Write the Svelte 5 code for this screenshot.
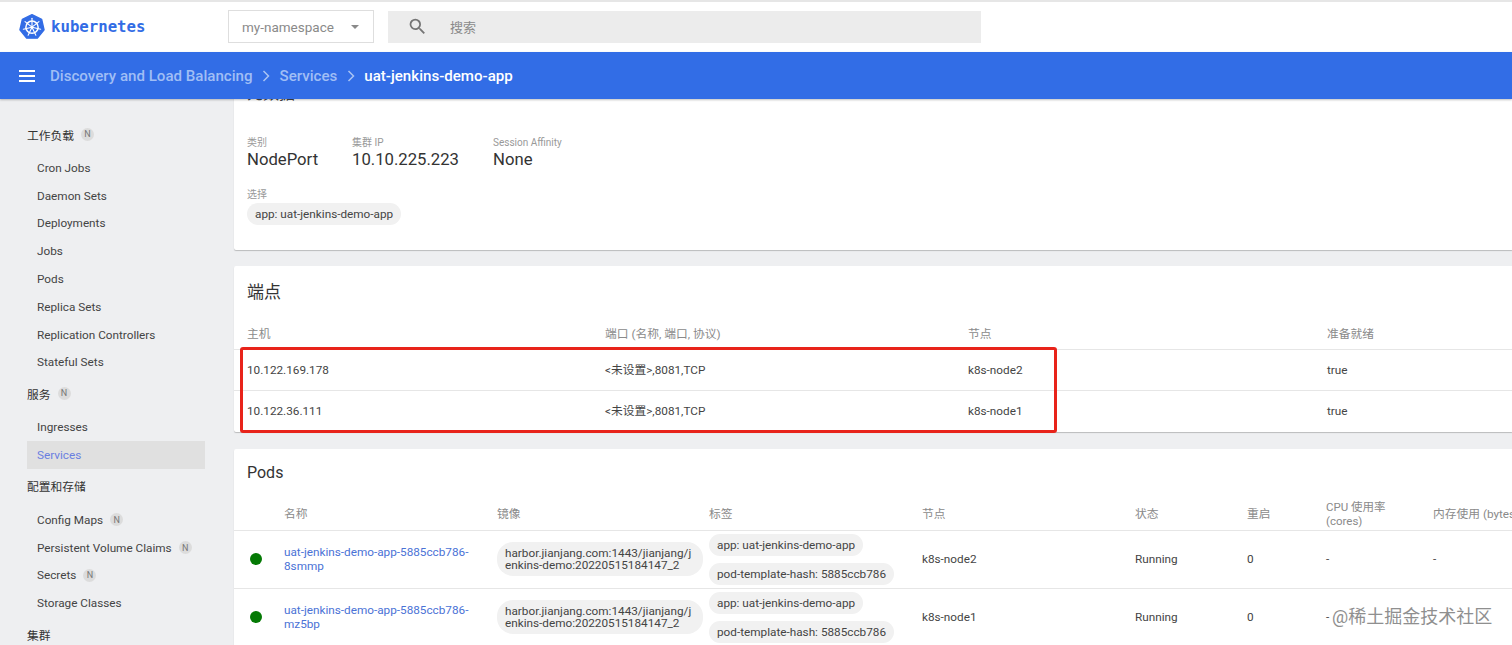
<script>
	const spokes = [0, 1, 2, 3, 4, 5, 6];

	const groups = [
		{
			title: '工作负载',
			badge: true,
			items: [
				{ label: 'Cron Jobs' },
				{ label: 'Daemon Sets' },
				{ label: 'Deployments' },
				{ label: 'Jobs' },
				{ label: 'Pods' },
				{ label: 'Replica Sets' },
				{ label: 'Replication Controllers' },
				{ label: 'Stateful Sets' }
			]
		},
		{
			title: '服务',
			badge: true,
			items: [{ label: 'Ingresses' }, { label: 'Services', active: true }]
		},
		{
			title: '配置和存储',
			items: [
				{ label: 'Config Maps', badge: true },
				{ label: 'Persistent Volume Claims', badge: true },
				{ label: 'Secrets', badge: true },
				{ label: 'Storage Classes' }
			]
		},
		{ title: '集群', items: [] }
	];

	const endpoints = [
		{ host: '10.122.169.178', port: '<未设置>,8081,TCP', node: 'k8s-node2', ready: 'true' },
		{ host: '10.122.36.111', port: '<未设置>,8081,TCP', node: 'k8s-node1', ready: 'true' }
	];

	// the watermark sits where the second row's memory value would be
	const pods = [
		{ name: 'uat-jenkins-demo-app-5885ccb786-8smmp', node: 'k8s-node2', mem: '-' },
		{ name: 'uat-jenkins-demo-app-5885ccb786-mz5bp', node: 'k8s-node1', mem: '' }
	];
</script>

<div class="page">
	<header class="top">
		<div class="brand">
			<svg class="logo" viewBox="0 0 28 28" width="26" height="26">
				<path d="M14 .8 24.4 5.8 27 17 19.8 26 8.2 26 1 17 3.6 5.8Z" fill="#326ce5" stroke="#326ce5" stroke-width="1.5" stroke-linejoin="round" />
				<g fill="none" stroke="#fff">
					<circle cx="14" cy="14.2" r="6.6" stroke-width="1.6" />
					<circle cx="14" cy="14.2" r="1.4" fill="#fff" stroke="none" />
					{#each spokes as s}
						<line x1="14" y1="14.2" x2="14" y2="4.6" stroke-width="1.2" stroke-linecap="round" transform="rotate({(s * 360) / 7} 14 14.2)" />
					{/each}
				</g>
			</svg>
			<span class="brand-name">kubernetes</span>
		</div>
		<div class="ns">
			<span>my-namespace</span>
			<i class="caret"></i>
		</div>
		<div class="search">
			<svg viewBox="0 0 24 24" width="21" height="21">
				<path d="M15.5 14h-.79l-.28-.27A6.47 6.47 0 0 0 16 9.5 6.5 6.5 0 1 0 9.5 16c1.61 0 3.09-.59 4.23-1.57l.27.28v.79l5 4.99L20.49 19l-4.99-5zm-6 0C7.01 14 5 11.99 5 9.5S7.01 5 9.5 5 14 7.01 14 9.5 11.99 14 9.5 14z" fill="#757575" />
			</svg>
			<span>搜索</span>
		</div>
	</header>

	<div class="bar">
		<div class="burger"><i></i><i></i><i></i></div>
		<span class="crumb">Discovery and Load Balancing</span>
		<svg class="chev" viewBox="0 0 8 12" width="8" height="12"><path d="M1.5 1 6.5 6 1.5 11" fill="none" stroke="#a9c3f3" stroke-width="1.5" /></svg>
		<span class="crumb">Services</span>
		<svg class="chev" viewBox="0 0 8 12" width="8" height="12"><path d="M1.5 1 6.5 6 1.5 11" fill="none" stroke="#a9c3f3" stroke-width="1.5" /></svg>
		<span class="crumb current">uat-jenkins-demo-app</span>
	</div>

	<div class="body">
		<nav class="side">
			{#each groups as group}
				<div class="group">
					<span>{group.title}</span>
					{#if group.badge}<b class="badge">N</b>{/if}
				</div>
				{#each group.items as item}
					<div class="item" class:active={item.active}>
						<span>{item.label}</span>
						{#if item.badge}<b class="badge">N</b>{/if}
					</div>
				{/each}
			{/each}
		</nav>

		<main class="main">
			<section class="card info">
				<h2 class="info-title">元数据</h2>
				<div class="facts">
					<div class="fact">
						<span class="fact-label">类别</span>
						<span class="fact-value">NodePort</span>
					</div>
					<div class="fact">
						<span class="fact-label">集群 IP</span>
						<span class="fact-value">10.10.225.223</span>
					</div>
					<div class="fact">
						<span class="fact-label">Session Affinity</span>
						<span class="fact-value">None</span>
					</div>
				</div>
				<span class="fact-label select-label">选择</span>
				<span class="chip">app: uat-jenkins-demo-app</span>
			</section>

			<section class="card endpoints">
				<h2 class="card-title ep-title">端点</h2>
				<div class="ep-row ep-head">
					<span>主机</span>
					<span>端口 (名称, 端口, 协议)</span>
					<span>节点</span>
					<span>准备就绪</span>
				</div>
				{#each endpoints as ep}
					<div class="ep-row">
						<span>{ep.host}</span>
						<span>{ep.port}</span>
						<span>{ep.node}</span>
						<span>{ep.ready}</span>
					</div>
				{/each}
				<div class="redbox"></div>
			</section>

			<section class="card pods">
				<h2 class="card-title pods-title">Pods</h2>
				<div class="pod-row pod-head">
					<span></span>
					<span>名称</span>
					<span>镜像</span>
					<span>标签</span>
					<span>节点</span>
					<span>状态</span>
					<span>重启</span>
					<span class="cpu">CPU 使用率<br />(cores)</span>
					<span class="mem">内存使用 (bytes)</span>
				</div>
				{#each pods as pod}
					<div class="pod-row">
						<i class="dot"></i>
						<a class="pod-name" href="#top">{pod.name}</a>
						<span class="chip image">harbor.jianjang.com:1443/jianjang/jenkins-demo:20220515184147_2</span>
						<div class="labels">
							<span class="chip">app: uat-jenkins-demo-app</span>
							<span class="chip">pod-template-hash: 5885ccb786</span>
						</div>
						<span>{pod.node}</span>
						<span>Running</span>
						<span>0</span>
						<span>-</span>
						<span>{pod.mem}</span>
					</div>
				{/each}
			</section>
		</main>
	</div>

	<div class="watermark">@稀土掘金技术社区</div>
</div>

<style>
	:global(body) {
		margin: 0;
		background: #eeeff1;
	}

	.page {
		position: relative;
		display: flex;
		flex-direction: column;
		height: 645px;
		overflow: hidden;
		font-family: Roboto, "Noto Sans CJK SC", sans-serif;
		font-size: 11.75px;
		color: #333;
		background: #eeeff1;
	}

	.top {
		display: flex;
		align-items: center;
		flex: none;
		box-sizing: border-box;
		height: 52px;
		padding-bottom: 1px;
		background: #fff;
		border-top: 2px solid #e6e6e6;
	}

	.brand {
		display: flex;
		align-items: center;
		width: 228px;
		padding-left: 19px;
		box-sizing: border-box;
	}

	.logo {
		flex: none;
	}

	.brand-name {
		margin-left: 6px;
		font-family: "DejaVu Sans Mono", monospace;
		font-size: 15.7px;
		font-weight: 700;
		color: #326ce5;
	}

	.ns {
		display: flex;
		align-items: center;
		justify-content: space-between;
		box-sizing: border-box;
		width: 146px;
		height: 33px;
		padding: 0 14px 0 13px;
		border: 1px solid #dedede;
		font-size: 13.5px;
		color: #8a8a8a;
	}

	.caret {
		width: 0;
		height: 0;
		border-left: 4px solid transparent;
		border-right: 4px solid transparent;
		border-top: 4px solid #8a8a8a;
	}

	.search {
		display: flex;
		align-items: center;
		box-sizing: border-box;
		width: 593px;
		height: 32px;
		margin-left: 14px;
		padding-left: 19px;
		background: #ececec;
		font-size: 13px;
		color: #8a8a8a;
	}

	.search span {
		margin-left: 22px;
	}

	.bar {
		position: relative;
		z-index: 2;
		display: flex;
		align-items: center;
		flex: none;
		height: 47px;
		padding-left: 19px;
		background: #326de6;
		box-shadow: 0 1px 2px rgba(0, 0, 0, 0.25);
	}

	.burger {
		display: flex;
		flex-direction: column;
		gap: 3px;
		width: 16px;
		margin-right: 15px;
	}

	.burger i {
		display: block;
		height: 2px;
		background: #fff;
	}

	.crumb {
		font-size: 15.1px;
		font-weight: 500;
		color: #a0bef5;
	}

	.crumb.current {
		color: #fff;
	}

	.chev {
		margin: 0 9.5px;
	}

	.body {
		display: flex;
		flex: 1;
		min-height: 0;
	}

	.side {
		flex: none;
		box-sizing: border-box;
		width: 226px;
		padding: 18px 21px 0 27px;
	}

	.group {
		display: flex;
		align-items: center;
		gap: 7px;
		box-sizing: border-box;
		height: 37px;
		padding-bottom: 3px;
		color: #333;
	}

	.item {
		display: flex;
		align-items: center;
		gap: 7px;
		box-sizing: border-box;
		height: 27.8px;
		padding-left: 10px;
		color: #444;
	}

	.item.active {
		background: #e0e0e0;
		color: #6a7fe0;
	}

	.badge {
		display: flex;
		align-items: center;
		justify-content: center;
		width: 13px;
		height: 13px;
		border-radius: 50%;
		background: #dcdcdc;
		font-size: 9px;
		font-weight: 400;
		color: #777;
	}

	.main {
		flex: 1;
		min-width: 0;
		padding-left: 8px;
	}

	.card {
		position: relative;
		background: #fff;
		box-shadow: 0 1px 1px rgba(0, 0, 0, 0.22);
		border-radius: 2px 0 0 2px;
	}

	.info {
		display: flex;
		flex-direction: column;
		align-items: flex-start;
		box-sizing: border-box;
		height: 171px;
		margin-top: -20px;
		padding: 0 13px;
	}

	.info-title {
		box-sizing: border-box;
		height: 35px;
		margin: 0;
		padding-top: 5px;
		font-size: 16px;
		font-weight: 400;
		line-height: 20px;
		color: #444;
	}

	.facts {
		display: flex;
		margin-top: 23px;
	}

	.fact {
		display: flex;
		flex-direction: column;
	}

	.fact:nth-child(1) {
		width: 105px;
	}

	.fact:nth-child(2) {
		width: 141px;
	}

	.fact-label {
		font-size: 10px;
		line-height: 12px;
		color: #999;
	}

	.fact-value {
		font-size: 16.7px;
		line-height: 22px;
		color: #333;
	}

	.select-label {
		margin-top: 18px;
	}

	.chip {
		display: inline-block;
		box-sizing: border-box;
		margin-top: 2px;
		padding: 0 8px;
		height: 22px;
		line-height: 22px;
		border-radius: 11px;
		background: #f1f1f1;
		color: #444;
		white-space: nowrap;
	}

	.endpoints {
		margin-top: 16px;
		height: 166px;
	}

	.card-title {
		display: flex;
		align-items: center;
		box-sizing: border-box;
		height: 51px;
		margin: 0;
		padding-left: 13px;
		font-size: 16px;
		font-weight: 400;
		color: #333;
	}

	.ep-title {
		padding-bottom: 3px;
		font-size: 17px;
	}

	.ep-row {
		display: grid;
		grid-template-columns: 358px 363px 359px 1fr;
		align-items: center;
		box-sizing: border-box;
		height: 41px;
		padding-left: 13px;
		line-height: 14px;
		border-top: 1px solid #e6e6e6;
		color: #444;
	}

	.ep-head {
		height: 32px;
		padding-top: 2px;
		border-top: 0;
		color: #8a8a8a;
	}

	.ep-row:last-of-type {
		height: 42px;
	}

	.redbox {
		position: absolute;
		left: 6px;
		top: 81px;
		box-sizing: border-box;
		width: 817px;
		height: 86px;
		border: 3px solid #e8231a;
		border-radius: 3px;
	}

	.pods {
		margin-top: 17px;
		height: 240px;
	}

	.pods-title {
		height: 47px;
	}

	.pod-row {
		display: grid;
		grid-template-columns: 50px 213px 212px 213px 213px 112px 79px 107px 1fr;
		align-items: center;
		box-sizing: border-box;
		height: 58px;
		padding-bottom: 2px;
		line-height: 14px;
		border-top: 1px solid #e6e6e6;
		color: #444;
	}

	.pod-head {
		height: 34px;
		padding: 2px 0 0;
		border-top: 0;
		color: #8a8a8a;
	}

	.cpu {
		line-height: 14px;
		font-size: 11.5px;
	}

	.mem {
		white-space: nowrap;
	}

	.dot {
		width: 12px;
		height: 12px;
		margin-left: 16px;
		border-radius: 50%;
		background: #057a05;
	}

	.pod-name {
		display: block;
		width: 190px;
		line-height: 14px;
		color: #4a72d6;
		text-decoration: none;
	}

	.image {
		width: 206px;
		height: 34px;
		margin: 0;
		padding: 5px 8px;
		line-height: 12px;
		border-radius: 16px;
		white-space: normal;
		word-break: break-all;
	}

	.labels {
		display: flex;
		flex-direction: column;
		align-items: flex-start;
		gap: 7px;
		margin-top: 2px;
	}

	.labels .chip {
		margin: 0;
	}

	.watermark {
		position: absolute;
		left: 1332px;
		top: 605px;
		font-size: 18px;
		line-height: 24px;
		color: #8f8f8f;
	}
</style>
